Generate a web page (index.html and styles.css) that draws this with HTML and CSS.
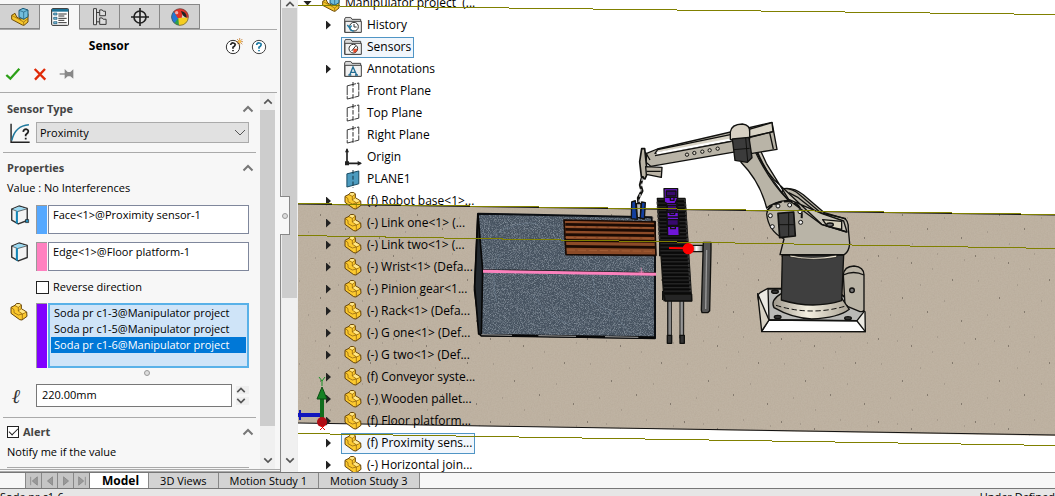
FILE: index.html
```html
<!DOCTYPE html>
<html lang="en">
<head>
<meta charset="utf-8">
<title>Manipulator project</title>
<link rel="stylesheet" href="styles.css">
</head>
<body>
<svg class="defs" aria-hidden="true">
  <symbol id="part" viewBox="0 0 54 54"><path d="M3 13 15 7 19 2 29 1 34 6 34 17 50 27 51 40 36 51 29 50 3 31Z" fill="#fcc92e" stroke="#64430b" stroke-width="3" stroke-linejoin="round"/><path d="M15 8 25 13V24L37 33 50 27M25 13 34 6M25 24 34 17M37 33V50M3 13 12 20 12 29 25 36 37 33" fill="none" stroke="#80560d" stroke-width="2"/><path d="M17 7 20 3 28 3 32 6 25 11ZM27 24 34 19 47 27 38 31Z" fill="#ffe78a"/></symbol>
  <symbol id="assembly" viewBox="0 0 54 54"><path d="M2 22 12 16 17 27 30 34 31 23 51 17 51 42 39 52 34 51 2 34Z" fill="#f5c52c" stroke="#704d08" stroke-width="3"/><path d="M2 22 15 29 17 27M15 29 38 42 51 32M38 42V51" fill="none" stroke="#8a620c" stroke-width="2"/><path d="M24 7 36 1 51 6V26L38 34 24 27Z" fill="#72bddc" stroke="#195a78" stroke-width="3"/><path d="M24 7 38 12 51 6M38 12V34" fill="none" stroke="#195a78" stroke-width="2"/></symbol>
  <symbol id="folder" viewBox="0 0 54 50"><path d="M2 47V7L5 2H20L24 8H50V47Z" fill="#d9d9d9" stroke="#444" stroke-width="3"/><path d="M3 14H52V47H3Z" fill="#f1f1f1" stroke="#444" stroke-width="3"/></symbol>
  <symbol id="plane" viewBox="0 0 42 56"><path d="M3 12V53L39 44V3Z" fill="#fff" stroke="#333" stroke-width="3" stroke-dasharray="29 3"/><path d="M21 0V56" stroke="#222" stroke-width="3" stroke-dasharray="14 5"/></symbol>
  <symbol id="up" viewBox="0 0 12 8"><path d="M1.500 6.500 6 2 10.500 6.500" fill="none" stroke="currentColor" stroke-width="2"/></symbol>
  <symbol id="down" viewBox="0 0 12 8"><path d="M1.500 1.500 6 6 10.500 1.500" fill="none" stroke="currentColor" stroke-width="2"/></symbol>
  <symbol id="cube" viewBox="0 0 54 58"><path d="M3 12 24 3 48 10V45L22 55 3 44Z" fill="#f3f3f3" stroke="#333" stroke-width="4" stroke-linejoin="round"/><path d="M5 12 24 4 46 11 22 19Z" fill="#9cdaf2"/><path d="M3 12 20 19 48 11" fill="none" stroke="#333" stroke-width="2"/><path d="M18 18V54" stroke="#1485b5" stroke-width="6"/></symbol>
</svg>
<div class="app">
  <main class="work">
    <aside class="panel">
      <nav class="tabs" aria-label="Manager tabs">
        <button class="tab" aria-label="Feature tree"><svg class="i18"><use href="#assembly"/></svg></button>
        <button class="tab active" aria-label="Properties"><svg class="i18" viewBox="0 0 54 54"><rect x="2" y="2" width="51" height="50" rx="3" fill="#fff" stroke="#222" stroke-width="3"/><path d="M3 7H52" stroke="#1b7195" stroke-width="8"/><path d="M22 18H47M22 24H40M22 31H47M22 37H40M22 44H47" stroke="#333" stroke-width="3"/><path d="M8 15H18V21H8ZM8 28H18V34H8ZM8 41H18V47H8Z" fill="#76bde0" stroke="#164e68" stroke-width="2"/></svg></button>
        <button class="tab" aria-label="Configurations"><svg class="i18" viewBox="0 0 46 56"><path d="M3 2H12V52H3Z" fill="#eee" stroke="#333" stroke-width="3"/><path d="M12 14H22M12 43H22" stroke="#333" stroke-width="3"/><path d="M22 6H30L33 10H40V24H22ZM22 31H30L33 35H42V51H22Z" fill="#ddd" stroke="#333" stroke-width="3"/></svg></button>
        <button class="tab" aria-label="Dimensions"><svg class="i18" viewBox="0 0 54 54"><circle cx="27" cy="27" r="18" fill="#ddd" stroke="#222" stroke-width="5"/><path d="M27 0V54M0 27H54" stroke="#222" stroke-width="5"/></svg></button>
        <button class="tab" aria-label="Display"><svg class="i18" viewBox="0 0 54 54"><path d="M1 27Q2 17 9 9L27 30V53Q4 50 1 27Z" fill="#2f9f4a"/><path d="M1 28Q2 17 8 10L22 30 10 46Q2 39 1 28Z" fill="#2577d6"/><path d="M8 10Q20-3 38 4L32 30H20Z" fill="#e33127"/><path d="M22 30 53 28Q50 52 27 53L24 53Z" fill="#f4cd20"/><path d="M30 7 38 4Q53 12 53 28L47 30Q43 14 30 7Z" fill="#e33127"/><path d="M30 9Q47 11 47 29 35 27 30 9Z" fill="#222"/><circle cx="27" cy="27" r="25" fill="none" stroke="#555" stroke-width="2"/><circle cx="17" cy="14" r="5" fill="#fff" opacity=".6"/></svg></button>
      </nav>
      <header class="head">
        <h1>Sensor</h1>
        <button class="bare" aria-label="What's new"><svg class="help" viewBox="0 0 54 54"><circle cx="24" cy="30" r="20" fill="#fff" stroke="#333" stroke-width="3"/><path d="M17 24Q18 17 25 18 32 19 30 25 29 28 24 31V35M24 39V43" fill="none" stroke="#222" stroke-width="5"/><path d="M44 3V25M33 14H54M36 6 52 22M52 6 36 22" stroke="#b96710" stroke-width="2"/><circle cx="44" cy="14" r="4" fill="#ffc847"/></svg></button>
        <button class="bare" aria-label="Help"><svg class="help" viewBox="0 0 54 54"><circle cx="27" cy="30" r="20" fill="#fff" stroke="#444" stroke-width="3"/><path d="M20 24Q21 17 28 18 35 19 33 25 32 28 27 31V35M27 39V43" fill="none" stroke="#1c79a3" stroke-width="5"/></svg></button>
      </header>
      <div class="actions">
        <button class="bare" aria-label="OK"><svg class="i16" viewBox="0 0 48 48"><path d="M4 27 16 38 43 8" fill="none" stroke="#2ca017" stroke-width="7"/></svg></button>
        <button class="bare" aria-label="Cancel"><svg class="i16" viewBox="0 0 48 48"><path d="M8 9 40 41M39 9 9 41" stroke="#e02a08" stroke-width="7"/></svg></button>
        <button class="bare" aria-label="Keep visible"><svg class="i16" viewBox="0 0 48 48"><path d="M2 24H18" stroke="#888" stroke-width="4"/><path d="M17 9 26 18H34L43 10V38L34 31H26L17 39Z" fill="#888"/></svg></button>
      </div>
      <div class="scroller">
        <div class="form">
          <section class="group">
            <h2><label for="type">Sensor Type</label><svg class="chev"><use href="#up"/></svg></h2>
            <div class="row">
              <svg class="i20" viewBox="0 0 56 56"><path d="M3 2V54H55" fill="none" stroke="#222" stroke-width="4"/><path d="M5 49Q14 8 53 5" fill="none" stroke="#1f789d" stroke-width="4"/><path d="M37 25Q38 17 45 17 54 19 50 27L44 33V37M44 41V46" fill="none" stroke="#222" stroke-width="5"/></svg>
              <div class="drop"><select id="type"><option>Proximity</option></select><svg class="arrow" viewBox="0 0 12 8"><path d="M1 1 6 6 11 1" fill="none" stroke="#555"/></svg></div>
            </div>
          </section>
          <section class="group props">
            <h2>Properties<svg class="chev"><use href="#up"/></svg></h2>
            <p class="value">Value : No Interferences</p>
            <div class="row pick"><svg class="i20" viewBox="0 0 54 58"><use href="#cube"/><path d="M43 42H52V51H43Z" fill="#268dbb" stroke="#222" stroke-width="2"/></svg><div class="field"><span class="swatch blue"></span><textarea readonly aria-label="Sensor face">Face&lt;1&gt;@Proximity sensor-1</textarea></div></div>
            <div class="row pick"><svg class="i20"><use href="#cube"/></svg><div class="field"><span class="swatch pink"></span><textarea readonly aria-label="Direction">Edge&lt;1&gt;@Floor platform-1</textarea></div></div>
            <label class="check indent"><input type="checkbox">Reverse direction</label>
            <div class="row bodies"><svg class="i18"><use href="#part"/></svg><div class="field"><span class="swatch violet"></span><ul class="list" role="listbox" aria-label="Components"><li role="option">Soda pr c1-3@Manipulator project</li><li role="option">Soda pr c1-5@Manipulator project</li><li role="option" class="chosen" aria-selected="true">Soda pr c1-6@Manipulator project</li></ul></div></div>
            <div class="grip"><i></i></div>
            <div class="row"><label class="ell" for="len">ℓ</label><input id="len" class="length" value="220.00mm"><div class="spin"><button class="bare" aria-label="Increase"><svg><use href="#up"/></svg></button><button class="bare" aria-label="Decrease"><svg><use href="#down"/></svg></button></div></div>
          </section>
          <section class="group alert">
            <h2><label class="check"><input type="checkbox" checked>Alert</label><svg class="chev"><use href="#up"/></svg></h2>
            <p>Notify me if the value</p>
          </section>
        </div>
        <div class="bar"><svg><use href="#up"/></svg><i class="thumb"></i><svg><use href="#down"/></svg></div>
      </div>
    </aside>
    <div class="bar outer"><svg><use href="#up"/></svg><i class="thumb"></i><svg><use href="#down"/></svg><span class="notch"><i></i></span></div>
    <section class="view">
      <svg class="scene" viewBox="298 0 757 473" preserveAspectRatio="xMinYMin slice" aria-label="Robot cell">
        <defs>
          <filter id="sand" x="0" y="0" width="1" height="1"><feTurbulence type="fractalNoise" baseFrequency=".7" numOctaves="3" seed="4"/><feColorMatrix values="0 0 0 0 .3  0 0 0 0 .25  0 0 0 0 .2  .3 0 0 0 -.1"/><feComposite in2="SourceGraphic" operator="in"/><feMerge><feMergeNode in="SourceGraphic"/><feMergeNode/></feMerge></filter>
          <filter id="stone" x="0" y="0" width="1" height="1"><feTurbulence type="fractalNoise" baseFrequency=".4" numOctaves="4" seed="8"/><feColorMatrix values="0 0 0 0 .62  0 0 0 0 .72  0 0 0 0 .82  .7 0 0 0 -.3"/><feComposite in2="SourceGraphic" operator="in"/><feMerge><feMergeNode in="SourceGraphic"/><feMergeNode/></feMerge></filter>
          <pattern id="specks" width="97" height="83" patternUnits="userSpaceOnUse"><path d="M5 7h1M79 31h1M38 14h1M54 63h1M29 49h1M88 72h1" stroke="#4c443b"/><path d="M24 9h1M59 20h1M8 32h1M39 78h1M71 52h1M17 66h1M47 36h1M91 11h1M64 5h1" stroke="#91867a"/></pattern>
          <pattern id="slats" width="100" height="11" patternUnits="userSpaceOnUse"><path d="M0 0H100V11H0Z" fill="#090909"/><path d="M0 5H100" stroke="#353535" stroke-width="3"/></pattern>
          <linearGradient id="cone"><stop stop-color="#9d978b"/><stop offset=".45" stop-color="#f4efe0"/><stop offset="1" stop-color="#a9a294"/></linearGradient>
          <linearGradient id="steel"><stop stop-color="#555"/><stop offset=".4" stop-color="#fff"/><stop offset="1" stop-color="#777"/></linearGradient>
        </defs>
        <path d="M298 204 1055 215V436L298 423Z" fill="#bfb3a3" filter="url(#sand)"/>
        <path d="M298 204 1055 215V436L298 423Z" fill="url(#specks)"/>
        <path d="M298 204 1055 215M298 423 1055 435" stroke="#111"/>
        <g transform="translate(470 180) scale(.33333)" stroke-linejoin="round">
          <path d="M24 101 545 112 558 230 555 475 32 465 14 320Z" fill="#465260" filter="url(#stone)"/>
          <path d="M24 101 545 112V125H555V475L32 465 14 330Z" fill="none" stroke="#0b0e12" stroke-width="6"/>
          <path d="M24 103 38 270 34 465 26 462 14 320Z" fill="#22282e" stroke="#080808" stroke-width="5"/>
          <path d="M32 466 554 473" stroke="#080808" stroke-width="8"/><path d="M34 464 126 466M205 467 318 469M405 470 505 472" stroke="#eee" stroke-width="2"/>
          <path d="M90 220Q60 290 80 365M365 280Q380 340 375 370M190 345Q230 410 292 430M500 270Q530 320 550 330M330 340Q440 400 480 460M60 170Q150 120 200 130" fill="none" stroke="#8397a9" stroke-width="2" opacity=".55"/>
          <path d="M282 120 554 126 558 226 288 224Z" fill="#8c4b28" stroke="#180a04" stroke-width="5"/>
          <path d="M286 133 553 137M286 148 553 152M286 164 553 167M286 181 554 184M288 199 556 202" stroke="#1c0b04" stroke-width="8"/>
          <path d="M286 140 553 144M286 172 553 175M290 210 555 214" stroke="#af663b" stroke-width="2" stroke-dasharray="25 8"/>
          <path d="M39 270 558 279" stroke="#111" stroke-width="5"/><path d="M39 274 558 283" stroke="#fb82bd" stroke-width="9"/><path d="M514 263V281M506 276H522" stroke="#ff8fc5" stroke-width="2"/>
        </g>
        <g transform="translate(620 110) scale(.33333)" stroke="#11110f" stroke-width="4" stroke-linejoin="round">
          <path d="M422 547 444 535H640L735 605 736 665 431 663 413 555Z" fill="#ebe9e2"/>
          <path d="M444 537H640L732 605 711 632 447 629Z" fill="#b9b9b6"/><path d="M447 630 711 633 736 665H425Z" fill="#fff"/><path d="M413 551 447 630 425 663Z" fill="#d8d2c4"/>
          <g fill="#333"><ellipse cx="465" cy="545" rx="10" ry="5"/><ellipse cx="473" cy="621" rx="10" ry="5"/><ellipse cx="684" cy="625" rx="10" ry="5"/></g>
          <path d="M670 495Q672 469 702 468 732 471 732 495V599Q732 605 720 605L675 586Z" fill="#b9b3a5"/><path d="M670 495Q700 480 732 495" fill="none"/><circle cx="696" cy="541" r="7" fill="#777"/>
          <path d="M485 550Q450 570 462 593 515 624 575 627 655 624 688 598L662 560Z" fill="url(#cone)"/><path d="M468 586Q576 620 684 586" fill="none" stroke-width="3" stroke-dasharray="16 8"/>
          <path d="M487 435H671L665 572Q577 599 484 570Z" fill="#3f3f3f"/><path d="M510 435Q575 450 650 435V442Q580 454 510 441Z" fill="#eee6d4" stroke-width="2"/>
          <path d="M490 236Q520 231 550 254L613 308 672 325Q686 330 685 357L689 401Q687 425 673 434H480L492 387Q445 363 440 312 443 286 473 277Z" fill="#b9b4a7"/>
          <path d="M490 236Q517 234 539 254L603 309 678 326M506 248 535 263 590 307 662 331" fill="none"/>
          <path d="M402 105Q421 164 464 211L605 343 681 366 671 333 606 311 506 268 439 160 408 92Z" fill="#c9c4b8"/><path d="M363 157Q420 215 440 294 463 274 505 271 449 215 403 120Z" fill="#b9b4a7"/><path d="M410 120Q440 194 503 268L606 344 680 366" fill="none"/>
          <path d="M608 329 665 334V358L622 349Z" fill="#d8d2bd"/><ellipse cx="630" cy="344" rx="10" ry="5" fill="#777"/>
          <path d="M440 304Q460 272 512 274 550 287 545 325" fill="none" stroke-width="6" stroke-dasharray="24 7"/>
          <g fill="#eee" stroke-width="3"><circle cx="474" cy="288" r="6"/><circle cx="509" cy="285" r="6"/><circle cx="540" cy="305" r="6"/><circle cx="542" cy="337" r="6"/><circle cx="451" cy="317" r="6"/><circle cx="457" cy="350" r="6"/></g>
          <path d="M474 310 521 306 526 378 479 383Z" fill="#3b3b3b" stroke-width="5"/><path d="M506 308V378M475 344H524" stroke-width="3"/>
          <path d="M112 117 456 37 471 118 397 130 350 125 92 169 78 157 80 130Z" fill="#b9b4a7"/><path d="M113 119 335 73 456 38 459 65 362 87 105 130Z" fill="#d9d4c6"/><path d="M110 130 335 88" stroke="#fff" stroke-width="7"/><path d="M105 137 335 94M367 88 459 65M449 68 460 117" fill="none"/>
          <path d="M331 66Q334 43 367 42 391 45 389 66V87Q360 99 331 88Z" fill="#d7d0c3"/><path d="M337 87 387 82 396 143 382 157 345 151Z" fill="#3b3b3b"/><path d="M341 119 389 115M377 83 383 154" stroke-width="3"/>
          <g fill="#d8d2c4" stroke-width="3"><circle cx="201" cy="134" r="5"/><circle cx="223" cy="129" r="5"/><circle cx="247" cy="125" r="5"/><circle cx="269" cy="121" r="5"/><circle cx="293" cy="116" r="5"/></g>
          <path d="M65 116H74L82 190 75 207 64 199 59 155Z" fill="#bab4a6" stroke-width="5"/><path d="M77 170 126 172 124 202 79 193Z" fill="#bbb4a6"/><path d="M80 184H122M76 126 90 150" fill="none"/>
          <path d="M68 198 61 225 66 243 55 264 57 289" fill="none" stroke-width="9"/><path d="M67 205 64 226 62 244 56 284" fill="none" stroke="#ccc" stroke-width="4" stroke-dasharray="8 8"/>
          <path d="M35 276 46 272 52 328 34 326ZM65 276 76 278 73 327 60 324Z" fill="#123f9f"/><path d="M49 281 63 281 61 323H52Z" fill="#bbb"/>
          <path d="M112 265H195L203 382 215 572H132L123 435 119 437V380Z" fill="url(#slats)"/>
          <path d="M112 275 119 395M195 267 211 545" stroke="#333" stroke-width="5" stroke-dasharray="9 4"/>
          <path d="M132 236H173V264L166 279 172 284 175 307 178 377H143L140 280 133 276Z" fill="#6f16d8"/><path d="M139 243H168V258H139ZM142 286H170V303H142ZM142 329H175V346H142Z" fill="#37096e"/><path d="M136 262H172M140 281H174M140 307H176M142 321H178M142 349H178M151 263V271H162V263M150 305V313H164V305M152 348V356H166V348" fill="none"/>
          <path d="M143 572H154V685H143ZM180 572H191V685H180Z" fill="url(#steel)" stroke-width="3"/><path d="M142 676H155V700H142ZM180 676H193V700H180Z" fill="#333"/>
          <path d="M128 543V570M132 553H215V573H136Z" fill="#252525"/>
          <path d="M215 406H250V425H215Z" fill="url(#steel)"/><path d="M250 397H273V419L269 602 263 608H246L244 600Z" fill="#555"/><path d="M260 420 257 597" stroke="#999"/>
          <path d="M147 414 190 415" stroke="#f00" stroke-width="6"/><circle cx="205" cy="416" r="17" fill="#f00" stroke="none"/>
        </g>
      </svg>
      <ul class="tree" aria-label="Manipulator project">
        <li class="root"><b class="tw open"></b><svg><use href="#assembly"/></svg><span>Manipulator project &nbsp;(...</span></li>
        <li><b class="tw"></b><svg viewBox="0 0 54 50"><use href="#folder"/><circle cx="30" cy="30" r="13" fill="#fff" stroke="#333" stroke-width="3"/><path d="M30 22V31H38" fill="none" stroke="#333" stroke-width="3"/><path d="M10 25 17 34 23 27M17 34Q18 43 29 43" fill="none" stroke="#197ba7" stroke-width="4"/></svg><span>History</span></li>
        <li><b class="tw none"></b><div class="hit"><svg viewBox="0 0 54 50"><use href="#folder"/><circle cx="28" cy="30" r="13" fill="#fff" stroke="#333" stroke-width="3"/><path d="M28 30 40 30A12 12 0 0 1 28 42Z" fill="#e84b2a"/><path d="M23 37 35 22" stroke="#333" stroke-width="3"/></svg><span>Sensors</span></div></li>
        <li><b class="tw"></b><svg viewBox="0 0 54 50"><use href="#folder"/><path d="M17 43 27 19 38 43M21 35H34M13 43H22M33 43H42" fill="none" stroke="#246e94" stroke-width="4"/></svg><span>Annotations</span></li>
        <li><b class="tw none"></b><svg><use href="#plane"/></svg><span>Front Plane</span></li>
        <li><b class="tw none"></b><svg><use href="#plane"/></svg><span>Top Plane</span></li>
        <li><b class="tw none"></b><svg><use href="#plane"/></svg><span>Right Plane</span></li>
        <li><b class="tw none"></b><svg viewBox="0 0 54 54"><path d="M9 4V46H50" fill="none" stroke="#222" stroke-width="5"/><path d="M9 0 15 13H3ZM54 46 41 39V53ZM3 40H15V52H3Z" fill="#222"/></svg><span>Origin</span></li>
        <li><b class="tw none"></b><svg viewBox="0 0 42 56"><path d="M2 12 39 3V43L2 53Z" fill="#4c9bbf" stroke="#164960" stroke-width="3"/><path d="M21 0V56" stroke="#112f3c" stroke-width="3" stroke-dasharray="12 6"/></svg><span>PLANE1</span></li>
        <li><b class="tw"></b><svg><use href="#part"/></svg><span>(f) Robot base&lt;1&gt;...</span></li>
        <li><b class="tw"></b><svg><use href="#part"/></svg><span>(-) Link one&lt;1&gt; (...</span></li>
        <li><b class="tw"></b><svg><use href="#part"/></svg><span>(-) Link two&lt;1&gt; (...</span></li>
        <li><b class="tw"></b><svg><use href="#part"/></svg><span>(-) Wrist&lt;1&gt; (Defa...</span></li>
        <li><b class="tw"></b><svg><use href="#part"/></svg><span>(-) Pinion gear&lt;1...</span></li>
        <li><b class="tw"></b><svg><use href="#part"/></svg><span>(-) Rack&lt;1&gt; (Defa...</span></li>
        <li><b class="tw"></b><svg><use href="#part"/></svg><span>(-) G one&lt;1&gt; (Def...</span></li>
        <li><b class="tw"></b><svg><use href="#part"/></svg><span>(-) G two&lt;1&gt; (Def...</span></li>
        <li><b class="tw"></b><svg><use href="#part"/></svg><span>(f) Conveyor syste...</span></li>
        <li><b class="tw"></b><svg><use href="#part"/></svg><span>(-) Wooden pallet...</span></li>
        <li><b class="tw"></b><svg><use href="#part"/></svg><span>(f) Floor platform...</span></li>
        <li><b class="tw"></b><div class="hit"><svg><use href="#part"/></svg><span>(f) Proximity sens...</span></div></li>
        <li><b class="tw"></b><svg><use href="#part"/></svg><span>(-) Horizontal join...</span></li>
      </ul>
      <svg class="scene guides" viewBox="298 0 757 473" preserveAspectRatio="xMinYMin slice" aria-hidden="true">
        <path d="M298 5.500 1055 14.500M298 203.500 1055 214.500M298 235.500 1055 248.500M298 433.500 1055 445.500" stroke="#808000" shape-rendering="crispEdges"/>
        <path d="M298 415H322" stroke="#1115bd" stroke-width="4"/><path d="M300 410V420" stroke="#1115bd" stroke-width="2"/><path d="M322 418V398" stroke="#116d1d" stroke-width="4"/><path d="M322 387 327 399H317Z" fill="#158224" stroke="#0a4d12"/><path d="M319 377 322 381V386M325 377 322 381" fill="none" stroke="#169024"/><circle cx="322" cy="422" r="5" fill="#b00e17"/><path d="M320 425 325 430M325 425 320 430" stroke="#e00"/>
      </svg>
    </section>
  </main>
  <nav class="sheets" aria-label="Sheets">
    <div class="steps">
      <button aria-label="First"><svg viewBox="0 0 12 12"><path d="M2 1V11M10 1 4 6 10 11Z"/></svg></button><button aria-label="Previous"><svg viewBox="0 0 12 12"><path d="M9 1 3 6 9 11Z"/></svg></button><button aria-label="Next"><svg viewBox="0 0 12 12"><path d="M3 1 9 6 3 11Z"/></svg></button><button aria-label="Last"><svg viewBox="0 0 12 12"><path d="M10 1V11M2 1 8 6 2 11Z"/></svg></button>
    </div>
    <button class="sheet on">Model</button><button class="sheet">3D Views</button><button class="sheet">Motion Study 1</button><button class="sheet">Motion Study 3</button>
  </nav>
  <footer class="status"><span>Soda pr c1-6</span><span>Under Defined</span></footer>
</div>
</body>
</html>
```

FILE: styles.css
```css
* { box-sizing: border-box; }
body { margin: 0; font-family: "Open Sans", "Noto Sans", sans-serif; font-size: 11px; line-height: 16px; color: #000; }
button, input, select, textarea { font: inherit; color: inherit; margin: 0; }
h1, h2, p, ul { margin: 0; padding: 0; list-style: none; }
svg { display: block; flex: none; }
.defs { position: absolute; width: 0; height: 0; }
.app { height: 100vh; display: flex; flex-direction: column; overflow: hidden; background: #fff; }
.work { flex: 1; min-height: 0; display: flex; }
.i16 { width: 16px; height: 16px; }
.i18 { width: 18px; height: 18px; }
.i20 { width: 20px; height: 20px; }
.bare { display: flex; padding: 0; border: 0; background: none; }

.panel { width: 281px; flex: none; display: flex; flex-direction: column; background: #f7f7f7; border-right: 1px solid #888; }
.tabs { display: flex; margin: 4px 3px 0 0; border-bottom: 1px solid #aaa; }
.tab { width: 40px; height: 25px; padding: 0; display: flex; align-items: center; justify-content: center; background: #d2d2d2; border: 1px solid #888; border-left-width: 0; }
.tab.active { background: #f7f7f7; border-bottom-color: #f7f7f7; margin-bottom: -1px; height: 26px; }
.head { display: flex; align-items: center; height: 31px; gap: 7px; padding-right: 12px; }
.head h1 { flex: 1; padding-left: 0; text-align: center; font-size: 12px; font-weight: 700; }
.help { width: 18px; height: 18px; }
.actions { display: flex; gap: 11px; height: 32px; align-items: center; padding: 0 5px 6px; border-bottom: 1px solid #aaa; margin-right: 3px; }
.scroller { flex: 1; min-height: 0; display: flex; padding-right: 5px; border-bottom: 3px double #aaa; }
.form { flex: 1; overflow: hidden; padding: 0 4px 0 3px; }
.group { padding: 8px 7px 0 4px; }
.group + .group { border-top: 1px solid #aaa; }
.group h2 { display: flex; justify-content: space-between; align-items: center; height: 16px; font-size: 11px; color: #444; margin-right: -5px; }
.group:first-child { padding-bottom: 9px; }
.props { padding-bottom: 10px; }
.group.props { padding-top: 7px; }
.chev { width: 12px; height: 8px; color: #777; }
.row { display: grid; grid-template-columns: 25px 1fr; align-items: center; column-gap: 4px; }
.group:first-child .row { margin-top: 5px; }
.row > svg { margin-left: 3px; }
.drop { display: grid; align-items: center; }
.drop > * { grid-area: 1 / 1; }
.drop select { appearance: none; width: 100%; height: 21px; padding: 0 3px; border: 1px solid #aaa; border-radius: 0; background: #e1e1e1; }
.arrow { width: 12px; height: 8px; justify-self: end; margin-right: 3px; pointer-events: none; }
.value { margin: 4px 0 9px; }
.pick { margin-bottom: 8px; align-items: start; }
.field { display: flex; gap: 1px; min-width: 0; }
.swatch { width: 11px; border: 1px solid #999; border-right: 0; border-bottom: 0; }
.blue { background: #55a8ff; }
.pink { background: #ff80c0; }
.violet { background: #8000ff; }
.field textarea { flex: 1; min-width: 0; height: 29px; padding: 1px 4px; resize: none; border: 1px solid #7f879c; border-radius: 0; overflow: hidden; background: #fff; }
.check { display: flex; align-items: center; gap: 4px; }
.check input { appearance: none; width: 13px; height: 13px; border: 1px solid #222; background: #fff; display: grid; place-items: center; }
.alert .check input { width: 12px; height: 12px; }
.check input:checked::after { content: ""; width: 8px; height: 4px; margin-bottom: 3px; border: solid #222; border-width: 0 0 1px 1px; rotate: -45deg; }
.indent { margin-left: 29px; }
.bodies { margin-top: 8px; align-items: start; }
.list { flex: 1; min-width: 0; height: 65px; padding: 0 1px; border: 2px solid #59b1e8; background: #cfe4f8; }
.list li { padding: 0 3px; white-space: nowrap; }
.list .chosen { background: #0078d7; color: #fff; }
.grip { height: 16px; padding: 2px 0 0 137px; }
.grip i, .notch i { display: block; width: 6px; height: 6px; border: 1px solid #999; border-radius: 50%; background: #ddd; }
.ell { font: italic 700 20px/20px "DejaVu Serif", serif; color: #333; padding-left: 5px; }
.row:has(.length) { grid-template-columns: 25px 1fr 13px; }
.length { height: 23px; min-width: 0; padding: 0 5px 3px; border: 1px solid #777; border-radius: 0; background: #fff; }
.spin { display: grid; gap: 3px; color: #555; }
.spin svg { width: 10px; height: 8px; }
.spin button { background: #eee; }
.alert { padding-top: 6px; }
.alert h2 { margin-bottom: 4px; }
.alert p { border-bottom: 1px solid #aaa; padding-bottom: 7px; }
.bar { width: 15px; flex: none; background: #f0f0f0; color: #555; display: flex; flex-direction: column; align-items: center; }
.bar > svg { width: 10px; height: 17px; }
.bar .thumb { width: 15px; flex: 1; background: #cdcdcd; margin-bottom: 26px; }
.outer { width: 17px; position: relative; padding-bottom: 3px; border: solid #eee; border-width: 0 1px; }
.outer > svg:first-child { height: 8px; }
.outer .thumb { margin-bottom: 154px; }
.notch { position: absolute; left: -2px; top: 196px; width: 10px; height: 39px; display: grid; place-items: center; background: #f7f7f7; border: 1px solid #888; border-left: 0; }

.view { flex: 1; min-width: 0; position: relative; overflow: hidden; background: #fff; }
.scene { width: 100%; height: 100%; }
.guides { position: absolute; inset: 0; pointer-events: none; }
.tree { position: absolute; left: 28px; top: -8px; }
.tree li { display: flex; align-items: center; height: 22px; white-space: nowrap; font-size: 12px; }
.tree svg { width: 18px; height: 18px; margin-right: 5px; }
.tw { width: 5px; height: 9px; margin-right: 13px; background: #222; clip-path: polygon(0 0, 100% 50%, 0 100%); }
.tw.none { background: none; }
.tree .root { margin-left: -23px; }
.tree .open { width: 9px; height: 5px; margin-right: 10px; clip-path: polygon(0 0, 100% 0, 50% 100%); }
.hit { display: flex; align-items: center; height: 21px; margin: 0 -3px; padding: 0 2px; border: 1px solid #5095c5; background: #eaf2faaa; }

.sheets { flex: none; height: 17px; display: flex; padding-left: 25px; background: #f7f7f7; border-top: 1px solid #777; border-bottom: 1px solid #777; }
.steps { display: flex; width: 65px; border: 1px solid #777; border-width: 0 1px 0 0; }
.steps button { flex: 1; padding: 0; display: grid; place-items: center; border: 0; border-left: 1px solid #888; background: #c5c5c5; }
.steps svg { width: 10px; height: 10px; fill: #999; stroke: #888; }
.sheet { padding: 0 11px; line-height: 14px; border: 0; border-right: 1px solid #888; background: #d3d3d3; white-space: nowrap; }
.sheet.on { padding: 0 9px 0 12px; font-size: 12px; font-weight: 700; background: #fff; }
.status { flex: none; height: 7px; display: flex; justify-content: space-between; overflow: hidden; background: #e6e6e6; }
```
